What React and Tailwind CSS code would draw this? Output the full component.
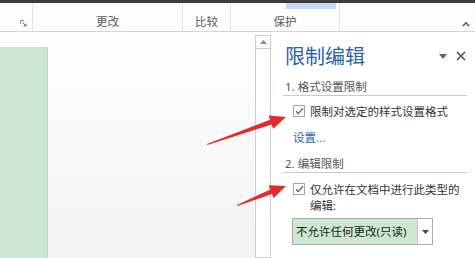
import React from 'react';

const CheckBox = () => (
  <span className="mt-[1px] flex h-[12px] w-[12px] shrink-0 items-center justify-center border border-[#a6a6a6] bg-white">
    <svg width="9" height="8" viewBox="0 0 9 8">
      <path d="M1 4.2 L3.4 6.6 L8 1.2" fill="none" stroke="#5a5a5a" strokeWidth="1.3" />
    </svg>
  </span>
);

const RibbonGroup = ({ width, label, children }) => (
  <div className={`relative flex h-full items-end justify-center border-r border-[#e2e2e2] pb-[1px] ${width}`}>
    {children}
    <span className="text-[11.5px] leading-[16px] text-[#5b5b5b]">{label}</span>
  </div>
);

const App = () => {
  return (
    <div
      className="relative h-[258px] w-[475px] overflow-hidden bg-white"
      style={{ fontFamily: '"Noto Sans", "Noto Sans CJK SC", sans-serif' }}
    >
      {/* window top edge */}
      <div className="h-[3px] bg-[#3d3d3d]" />

      {/* ribbon */}
      <div className="flex h-[29px] border-b border-[#d5d5d5] bg-[#fdfdfd]">
        <div className="flex h-full w-[33px] items-end justify-end border-r border-[#e2e2e2] pb-[4px] pr-[5px]">
          <svg width="7" height="7" viewBox="0 0 7 7">
            <path d="M0.5 4 V0.5 H4" fill="none" stroke="#8a8a8a" strokeWidth="1" />
            <path d="M2.5 2.5 L6 6 M6 3.5 V6 H3.5" fill="none" stroke="#6a6a6a" strokeWidth="1" />
          </svg>
        </div>
        <RibbonGroup width="w-[150px]" label="更改" />
        <RibbonGroup width="w-[48px]" label="比较" />
        <RibbonGroup width="w-[109px]" label="保护">
          <div className="absolute left-[55px] top-0 h-[6px] w-[50px] bg-[#c7daf1]" />
        </RibbonGroup>
        <div className="flex flex-1 items-end justify-end pb-[4px] pr-[5px]">
          <svg width="8" height="6" viewBox="0 0 8 6">
            <path d="M1 5 L4 1.8 L7 5" fill="none" stroke="#555" strokeWidth="1.6" />
          </svg>
        </div>
      </div>

      {/* body */}
      <div className="flex h-[226px]">
        {/* document */}
        <div className="flex w-[255px] flex-col bg-gradient-to-b from-white to-[#f3f3f3] pt-[15px]">
          <div className="flex-1 w-[48px] border-r border-[#c8cfc9] bg-[#cce8d0]" />
        </div>

        {/* scrollbar */}
        <div className="flex w-[16px] flex-col bg-white pt-[3px]">
          <div className="flex flex-1 flex-col border border-[#cdcdcd]">
            <div className="flex h-[13px] items-center justify-center border-b border-[#cdcdcd]">
              <svg width="7" height="4" viewBox="0 0 7 4">
                <path d="M0 4 L3.5 0 L7 4 Z" fill="#8c8c8c" />
              </svg>
            </div>
          </div>
        </div>

        {/* restrict editing pane */}
        <div className="flex w-[204px] flex-col bg-white pl-[12px] pr-[8px]">
          <div className="flex items-start justify-between pt-[13px]">
            <span className="ml-[2px] text-[20px] leading-[24px] text-[#2f62a3]">限制编辑</span>
            <div className="mt-[6px] flex items-center gap-[9px] pr-[1px]">
              <svg width="8" height="5" viewBox="0 0 8 5">
                <path d="M0 0 H8 L4 5 Z" fill="#666" />
              </svg>
              <svg width="10" height="10" viewBox="0 0 10 10">
                <path d="M1 1 L9 9 M9 1 L1 9" stroke="#555" strokeWidth="1.7" />
              </svg>
            </div>
          </div>

          <div className="mt-[10px] h-[17px] border-b border-[#c9c9c9] pl-[2px] text-[11.5px] leading-[16px] text-[#555]">
            1. 格式设置限制
          </div>

          <div className="ml-[10px] mt-[8px] flex items-start gap-[5px]">
            <CheckBox />
            <span className="text-[11.5px] leading-[16px] text-[#333]">限制对选定的样式设置格式</span>
          </div>

          <div className="ml-[10px] mt-[10px] text-[11.5px] leading-[16px] text-[#2a67b1]">设置...</div>

          <div className="mt-[10px] h-[17px] border-b border-[#c9c9c9] pl-[2px] text-[11.5px] leading-[16px] text-[#555]">
            2. 编辑限制
          </div>

          <div className="ml-[10px] mt-[9px] flex items-start gap-[5px]">
            <CheckBox />
            <span className="text-[11.5px] leading-[16px] text-[#333]">
              仅允许在文档中进行此类型的
              <br />
              编辑:
            </span>
          </div>

          <div className="ml-[9px] mt-[4px] flex h-[27px] w-[141px] border border-[#ababab]">
            <div className="flex flex-1 items-center bg-[#cce8d0] pl-[3px] text-[11.5px] text-[#222]">
              不允许任何更改(只读)
            </div>
            <div className="flex w-[15px] items-center justify-center border-l border-[#c4c4c4] bg-white">
              <svg width="7" height="4" viewBox="0 0 7 4">
                <path d="M0 0 H7 L3.5 4 Z" fill="#444" />
              </svg>
            </div>
          </div>
        </div>
      </div>

      {/* annotation arrows */}
      <svg className="pointer-events-none absolute left-0 top-0" width="475" height="258" viewBox="0 0 475 258">
        <polygon
          points="207,144 207.4,145 271.7,124.6 273.2,128.8 286,117 268.6,115.6 270.1,119.8"
          fill="#e42a2a"
        />
        <polygon
          points="237,205 237.4,206 272,194.1 273.6,198.3 286,186 268.6,185.3 270.2,189.5"
          fill="#e42a2a"
        />
      </svg>
    </div>
  );
};

export default App;
